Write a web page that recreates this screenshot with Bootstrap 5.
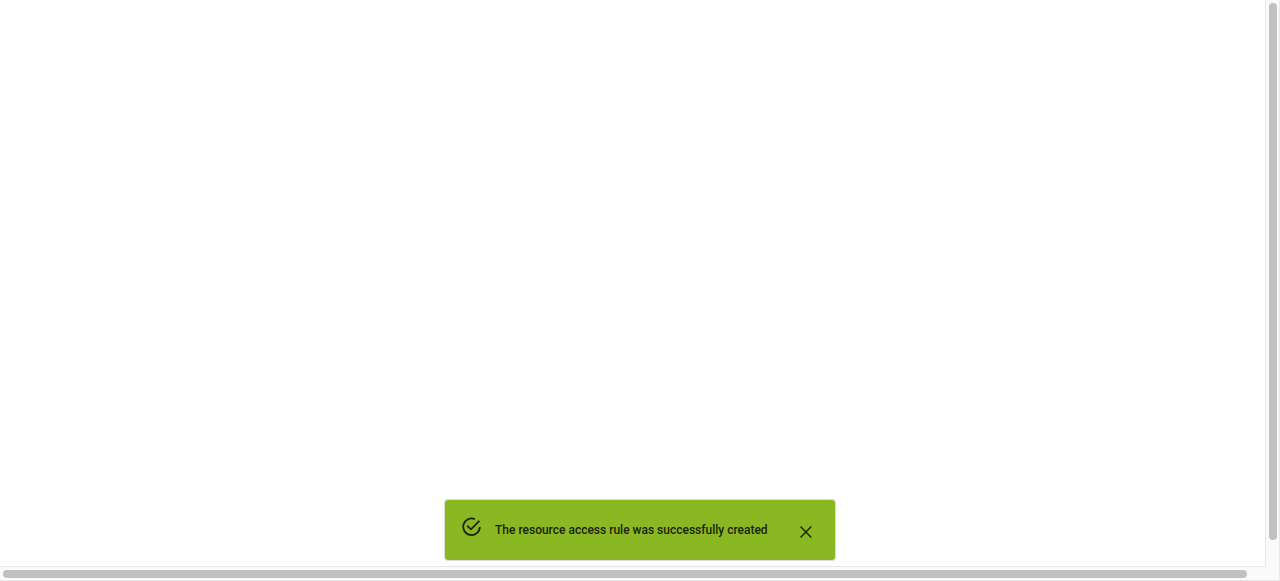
<!DOCTYPE html>
<html lang="en">
<head>
<meta charset="utf-8">
<meta name="viewport" content="width=device-width, initial-scale=1">
<title>Resource access rules</title>
<link href="https://cdn.jsdelivr.net/npm/bootstrap@5.3.0/dist/css/bootstrap.min.css" rel="stylesheet">
<style>
  body { font-family: Roboto, "Liberation Sans", sans-serif; background: #fff; }
  .app-frame { display: grid; grid-template: minmax(0, 1fr) 15px / minmax(0, 1fr) 15px; }
  .track { background: #fafafa; border: 0 solid #e8e8e8; padding: 3px; }
  .track-y { border-width: 0 1px 0 1px; }
  .track-x { border-width: 1px 0 1px 0; }
  .track-corner { background: #fafafa; border: solid #e8e8e8; border-width: 0 1px 1px 0; }
  .thumb { background: #c1c1c1; border-radius: 4px; }
  .track-y .thumb { width: 8px; }
  .track-x .thumb { height: 8px; }
  .stage { padding-left: 15px; }
  .notice {
    --bs-toast-max-width: 392px;
    width: 392px;
    min-height: 62px;
    margin-bottom: 5px;
    padding: 0 17px;
    color: #1a2307;
    background: #89b822;
    border: 1px solid #dcdfd6;
    border-radius: 4px;
    box-shadow: none;
    font-size: 12px;
    line-height: 16px;
  }
  .notice-icon { margin-bottom: 6px; }
  .notice-text { padding-left: 13px; }
  .notice-close { width: 24px; height: 24px; margin-top: 4px; line-height: 0; }
</style>
<script src="https://cdn.jsdelivr.net/npm/bootstrap@5.3.0/dist/js/bootstrap.bundle.min.js"></script>
</head>
<body>
<div class="app-frame vh-100">
  <main class="stage d-flex justify-content-center align-items-end">
    <div class="notice toast show d-flex align-items-center" role="status">
      <svg class="notice-icon flex-shrink-0" width="20" height="20" viewBox="0 0 20 20" fill="none" stroke="currentColor" stroke-width="1.8" aria-hidden="true">
        <path d="M12.8 2.1A8.3 8.3 0 1 0 17.8 9.9"/>
        <path d="M5.1 8.6 9 12.3 17.4 3.9"/>
      </svg>
      <span class="notice-text flex-grow-1 fw-medium">The resource access rule was successfully created</span>
      <button type="button" class="notice-close btn border-0 p-0 text-reset" data-bs-dismiss="toast" aria-label="Close">
        <svg width="12" height="12" viewBox="0 0 12 12" fill="none" stroke="currentColor" stroke-width="1.4" aria-hidden="true">
          <path d="M.5.6l10.8 10.8M11.3.6L.5 11.4"/>
        </svg>
      </button>
    </div>
  </main>
  <div class="track track-y" aria-hidden="true"><div class="thumb" style="height:95.9%"></div></div>
  <div class="track track-x" aria-hidden="true"><div class="thumb" style="width:98.8%"></div></div>
  <div class="track-corner" aria-hidden="true"></div>
</div>
</body>
</html>
